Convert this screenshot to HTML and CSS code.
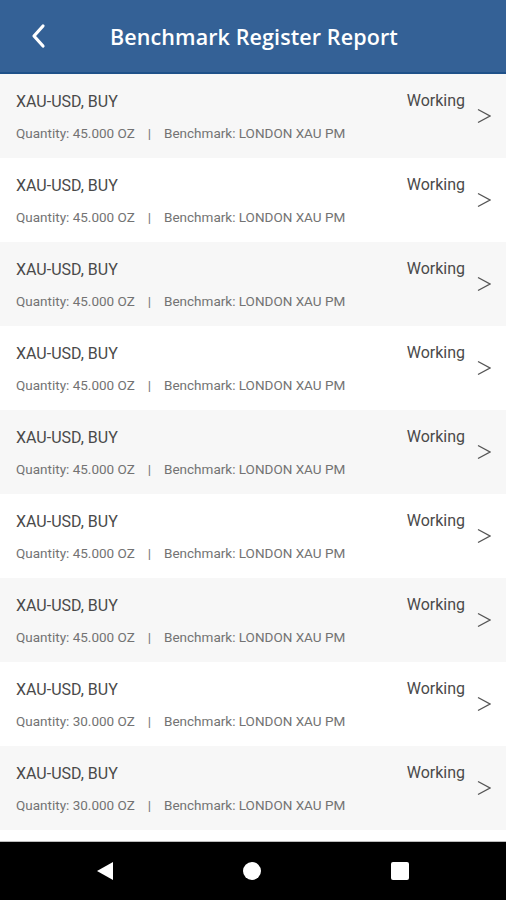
FILE: index.html
```html
<!DOCTYPE html>
<html>
  <head>
    <meta http-equiv="Content-type" content="text/html; charset=utf-8" />
    <meta name="viewport" content="width=device-width" />
    <link rel="stylesheet" href="styles.css">
  </head>
  <body>
    <div id="appframe">
      <div class="topbar">
        <span class="back">
          <svg width="16" height="26" viewBox="0 0 16 26"><path d="M13 3 L4 13 L13 23" fill="none" stroke="#fff" stroke-width="3.2" stroke-linecap="round" stroke-linejoin="round"/></svg>
        </span>
        <span class="title">Benchmark Register Report</span>
      </div>
      <div class="list">
        <div class="row">
          <div class="info"><p class="pair">XAU-USD, BUY</p><p class="detail">Quantity: 45.000 OZ<span class="sep">|</span>Benchmark: LONDON XAU PM</p></div>
          <div class="status">Working</div><div class="arrow"><svg width="14" height="16" viewBox="0 0 14 16"><path d="M1 1.5 L13 8 L1 14.5" fill="none" stroke="#555" stroke-width="1.4"/></svg></div>
        </div>
        <div class="row">
          <div class="info"><p class="pair">XAU-USD, BUY</p><p class="detail">Quantity: 45.000 OZ<span class="sep">|</span>Benchmark: LONDON XAU PM</p></div>
          <div class="status">Working</div><div class="arrow"><svg width="14" height="16" viewBox="0 0 14 16"><path d="M1 1.5 L13 8 L1 14.5" fill="none" stroke="#555" stroke-width="1.4"/></svg></div>
        </div>
        <div class="row">
          <div class="info"><p class="pair">XAU-USD, BUY</p><p class="detail">Quantity: 45.000 OZ<span class="sep">|</span>Benchmark: LONDON XAU PM</p></div>
          <div class="status">Working</div><div class="arrow"><svg width="14" height="16" viewBox="0 0 14 16"><path d="M1 1.5 L13 8 L1 14.5" fill="none" stroke="#555" stroke-width="1.4"/></svg></div>
        </div>
        <div class="row">
          <div class="info"><p class="pair">XAU-USD, BUY</p><p class="detail">Quantity: 45.000 OZ<span class="sep">|</span>Benchmark: LONDON XAU PM</p></div>
          <div class="status">Working</div><div class="arrow"><svg width="14" height="16" viewBox="0 0 14 16"><path d="M1 1.5 L13 8 L1 14.5" fill="none" stroke="#555" stroke-width="1.4"/></svg></div>
        </div>
        <div class="row">
          <div class="info"><p class="pair">XAU-USD, BUY</p><p class="detail">Quantity: 45.000 OZ<span class="sep">|</span>Benchmark: LONDON XAU PM</p></div>
          <div class="status">Working</div><div class="arrow"><svg width="14" height="16" viewBox="0 0 14 16"><path d="M1 1.5 L13 8 L1 14.5" fill="none" stroke="#555" stroke-width="1.4"/></svg></div>
        </div>
        <div class="row">
          <div class="info"><p class="pair">XAU-USD, BUY</p><p class="detail">Quantity: 45.000 OZ<span class="sep">|</span>Benchmark: LONDON XAU PM</p></div>
          <div class="status">Working</div><div class="arrow"><svg width="14" height="16" viewBox="0 0 14 16"><path d="M1 1.5 L13 8 L1 14.5" fill="none" stroke="#555" stroke-width="1.4"/></svg></div>
        </div>
        <div class="row">
          <div class="info"><p class="pair">XAU-USD, BUY</p><p class="detail">Quantity: 45.000 OZ<span class="sep">|</span>Benchmark: LONDON XAU PM</p></div>
          <div class="status">Working</div><div class="arrow"><svg width="14" height="16" viewBox="0 0 14 16"><path d="M1 1.5 L13 8 L1 14.5" fill="none" stroke="#555" stroke-width="1.4"/></svg></div>
        </div>
        <div class="row">
          <div class="info"><p class="pair">XAU-USD, BUY</p><p class="detail">Quantity: 30.000 OZ<span class="sep">|</span>Benchmark: LONDON XAU PM</p></div>
          <div class="status">Working</div><div class="arrow"><svg width="14" height="16" viewBox="0 0 14 16"><path d="M1 1.5 L13 8 L1 14.5" fill="none" stroke="#555" stroke-width="1.4"/></svg></div>
        </div>
        <div class="row">
          <div class="info"><p class="pair">XAU-USD, BUY</p><p class="detail">Quantity: 30.000 OZ<span class="sep">|</span>Benchmark: LONDON XAU PM</p></div>
          <div class="status">Working</div><div class="arrow"><svg width="14" height="16" viewBox="0 0 14 16"><path d="M1 1.5 L13 8 L1 14.5" fill="none" stroke="#555" stroke-width="1.4"/></svg></div>
        </div>
        <div class="row"></div>
      </div>
      <div class="navbar">
        <svg width="18" height="20" viewBox="0 0 18 20"><path d="M17 1 L17 19 L1 10 Z" fill="#fff"/></svg>
        <svg width="20" height="20" viewBox="0 0 20 20"><circle cx="10" cy="10" r="9" fill="#fff"/></svg>
        <svg width="20" height="20" viewBox="0 0 20 20"><rect x="1" y="1" width="18" height="18" rx="2" fill="#fff"/></svg>
      </div>
    </div>
  </body>
</html>
```

FILE: styles.css
```css
/* base */
html,body{margin:0;padding:0;height:100%;}
p{margin:0;padding:0}

/* css */
#appframe {width:506px;height:900px;display:flex;flex-direction:column;overflow:hidden;background:#fff;font-family:Roboto,"Noto Sans",sans-serif;}

.topbar {height:72px;flex:none;display:flex;align-items:center;background:#346196;border-bottom:2px solid #1f5189;color:#fff;}
.back {width:110px;display:flex;padding-left:30px;box-sizing:border-box;}
.title {font-family:"Open Sans",Lato,sans-serif;font-size:21.5px;font-weight:600;letter-spacing:0.1px;}

.list {flex:1;overflow:hidden;}
.row {height:84px;display:flex;align-items:flex-start;padding:0 15px 0 16px;box-sizing:border-box;}
.row:nth-child(odd) {background:#f7f7f7;}
.info {flex:1;padding-top:18px;}
.pair {font-size:16px;line-height:20px;color:#4a4a4a;}
.detail {margin-top:13px;font-size:13.5px;line-height:16px;color:#737373;}
.sep {margin:0 13px;}
.status {padding-top:17px;font-size:16px;line-height:20px;color:#4a4a4a;}
.arrow {padding:34px 0 0 12px;line-height:0;}

.navbar {height:58px;flex:none;display:flex;align-items:center;justify-content:center;gap:128px;background:#000;border-top:1px solid #bdbdbd;}
```
